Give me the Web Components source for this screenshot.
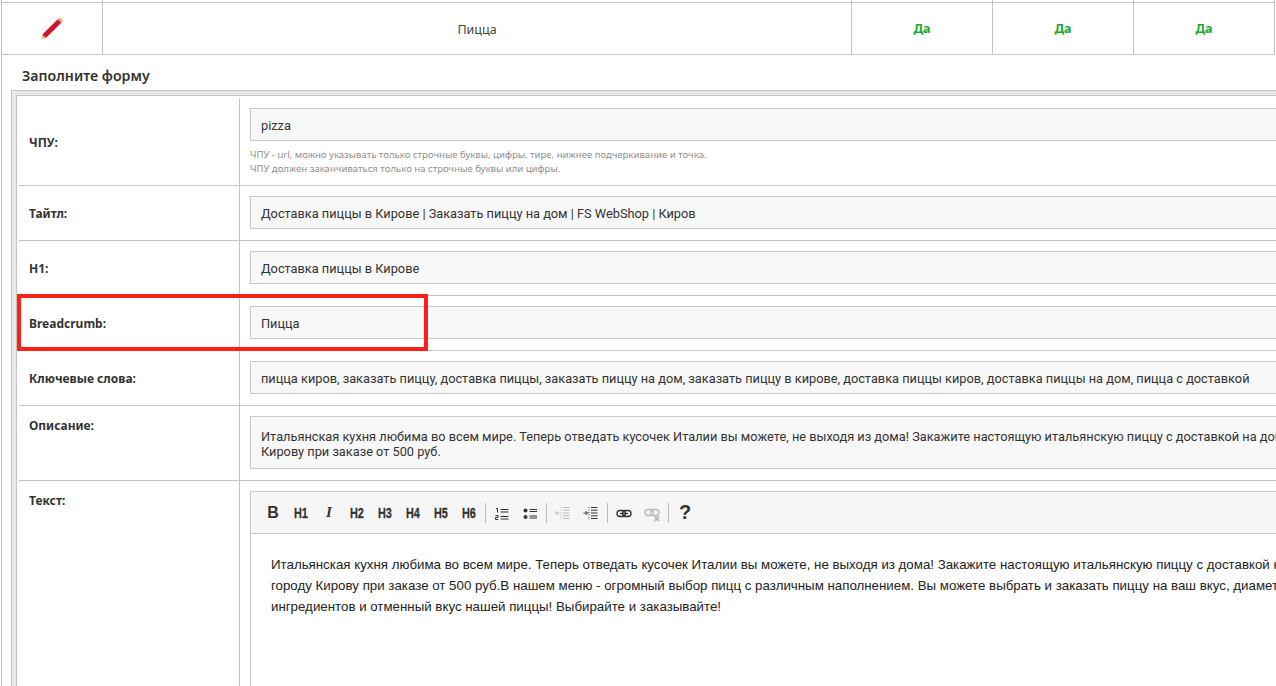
<!DOCTYPE html>
<html lang="ru"><head><meta charset="utf-8"><title>Форма</title>
<style>
html,body{margin:0;padding:0;width:1276px;height:686px;overflow:hidden;background:#fff}
body{font-family:"Noto Sans","Open Sans",sans-serif;font-size:13px;color:#333}
</style></head><body>
<data-row compact><span></span><span></span><span></span><span></span><span></span></data-row>
<data-row>
  <pencil-icon></pencil-icon><span>Пицца</span><yes-mark>Да</yes-mark><yes-mark>Да</yes-mark><yes-mark>Да</yes-mark>
</data-row>
<form-section heading="Заполните форму">
  <form-row label="ЧПУ:" center>
    <text-field>pizza</text-field>
    <help-text>ЧПУ - url, можно указывать только строчные буквы, цифры, тире, нижнее подчеркивание и точка.<br>ЧПУ должен заканчиваться только на строчные буквы или цифры.</help-text>
  </form-row>
  <form-row label="Тайтл:" center><text-field>Доставка пиццы в Кирове | Заказать пиццу на дом | FS WebShop | Киров</text-field></form-row>
  <form-row label="H1:" center><text-field>Доставка пиццы в Кирове</text-field></form-row>
  <form-row label="Breadcrumb:" center highlight><text-field>Пицца</text-field></form-row>
  <form-row label="Ключевые слова:" center><text-field>пицца киров, заказать пиццу, доставка пиццы, заказать пиццу на дом, заказать пиццу в кирове, доставка пиццы киров, доставка пиццы на дом, пицца с доставкой</text-field></form-row>
  <form-row label="Описание:"><text-field multi>Итальянская кухня любима во всем мире. Теперь отведать кусочек Италии вы можете, не выходя из дома! Закажите настоящую итальянскую пиццу с доставкой на дом по городу<br>Кирову при заказе от 500 руб.</text-field></form-row>
  <form-row label="Текст:">
    <rich-editor>Итальянская кухня любима во всем мире. Теперь отведать кусочек Италии вы можете, не выходя из дома! Закажите настоящую итальянскую пиццу с доставкой на дом по<br>городу Кирову при заказе от 500 руб.В нашем меню - огромный выбор пицц с различным наполнением. Вы можете выбрать и заказать пиццу на ваш вкус, диаметр<br>ингредиентов и отменный вкус нашей пиццы! Выбирайте и заказывайте!</rich-editor>
  </form-row>
</form-section>
<script>
function def(name, css, html){
  customElements.define(name, class extends HTMLElement{
    constructor(){super();const r=this.attachShadow({mode:'open'});
      r.innerHTML='<style>'+css+'</style>'+(typeof html==='function'?html(this):html);}
  });
}
const LINE='#c4c4c4';
def('data-row',`
  :host{display:grid;grid-template-columns:101px 749px 141px 141px 142px;margin-left:1px;width:1274px;height:51px;border-bottom:1px solid ${LINE};color:#444;font-size:12.5px}
  :host([compact]){height:2px}
  ::slotted(*){border-left:1px solid ${LINE};display:flex;align-items:center;justify-content:center;box-sizing:border-box;min-width:0}
  ::slotted(span){padding-top:1px}
  ::slotted(:last-child){border-right:1px solid ${LINE}}
`,'<slot></slot>');
def('yes-mark',`:host{color:#17ab2a;font-weight:700;font-size:12.5px}`,'<slot></slot>');
def('pencil-icon',`svg{display:block;width:24px;height:24px;margin:1px 0 0 0}`,`<svg viewBox="0 0 24 24" aria-hidden="true">
  <polygon points="1,22.5 2.4,17.6 5.9,21.1" fill="#fbb36b"/>
  <polygon points="2.4,17.6 17.8,2.2 21.3,5.7 5.9,21.1" fill="#d0142c"/>
  <polygon points="17.8,2.2 19.3,0.9 20.6,0.9 22.6,2.9 22.6,4.2 21.3,5.7" fill="#f6a57f"/>
</svg>`);
def('form-section',`
  :host{display:block;margin-left:1px;border-left:1px solid ${LINE};padding-left:9px;width:1500px;height:640px}
  h2{margin:0;font-size:14.2px;font-weight:600;color:#333;line-height:20px;padding:11px 0 4px 11px}
  .outer{border:1px solid ${LINE};background:#e9e9e9;padding:4px;border-right:0}
  .inner{border:1px solid ${LINE};background:#fff;padding:2px 0 0 2px}
`,h=>`<h2>${h.getAttribute('heading')}</h2><div class="outer"><div class="inner"><slot></slot></div></div>`);
def('form-row',`
  :host{display:grid;grid-template-columns:221px 1fr;border-bottom:1px solid ${LINE};position:relative}
  :host(:last-child){border-bottom:0}
  .label{border-right:1px solid ${LINE};padding:10px;font-weight:700;font-size:12px;color:#333;line-height:20px;box-sizing:border-box}
  :host([center]) .label{display:flex;align-items:center;padding-top:12px}
  .val{padding:10px 10px 11px;min-width:0}
  .mark{display:none;position:absolute;left:-2px;top:-2px;width:411px;height:57px;box-sizing:border-box;border:4px solid #fe2019;pointer-events:none}
  :host([highlight]) .mark{display:block}
`,h=>`<div class="label">${h.getAttribute('label')}</div><div class="val"><slot></slot></div><div class="mark"></div>`);
def('text-field',`
  :host{display:block;box-sizing:border-box;height:33px;border:1px solid #c8c8c8;background:#f8f8f8;padding:1px 10px 0;font-family:Roboto,"Noto Sans",sans-serif;font-size:12.78px;line-height:32px;white-space:nowrap;overflow:hidden;color:#333}
  :host([multi]){height:53px;line-height:15px;padding-top:12px}
`,'<slot></slot>');
def('help-text',`:host{display:block;font-size:9.58px;line-height:14px;color:#8f8f8f;margin-top:7px;margin-bottom:-2px;white-space:nowrap}`,'<slot></slot>');
def('tb-btn',`
  :host{display:flex;width:28px;height:28px;align-items:center;justify-content:center;font:700 15.5px "Liberation Sans",sans-serif;color:#333;flex:none}
  :host([head]) span{display:inline-block;transform:scaleX(.7);-webkit-text-stroke:.3px #333}
  :host([big]){font-size:16px}
  :host([ital]){font-style:italic;font-family:"Liberation Serif",serif;font-size:15px}
  ::slotted(svg){display:block;margin-top:2px}
`,'<span><slot></slot></span>');
def('tb-sep',`:host{display:block;width:5px;height:20px;flex:none}
  i{display:block;width:1px;height:20px;background:#bdbdbd;margin-left:2px}`,'<i></i>');
const S=(inner)=>`<svg viewBox="0 0 16 16" width="16" height="16" aria-hidden="true">${inner}</svg>`;
const ICONS={
 ol:`<path d="M2 2.5h1.5v4M6.5 3.5h8M6.5 6h8M6.5 10.5h8M6.5 13h8" fill="none" stroke="#333" stroke-width="1"/><path d="M1.5 9.5h2.6v2H1.5v2h2.8" fill="none" stroke="#333" stroke-width="1"/>`,
 ul:`<circle cx="3.5" cy="4.5" r="2" fill="#333"/><circle cx="3.5" cy="11" r="2" fill="#333"/><path d="M7.5 3.5h7.5M7.5 5.5h7.5M7.5 10h7.5M7.5 12h7.5" stroke="#333" stroke-width="1" fill="none"/>`,
 out:`<path d="M8 1.5h6.5M8 4.2h6.5M8 7h6.5M8 9.8h6.5M8 12.5h6.5" stroke="#bbb" fill="none"/><path d="M6 1v13" stroke="#bbb" stroke-dasharray="1 1.5" fill="none"/><path d="M4.5 7H.5M2.5 5 .5 7l2 2" stroke="#bbb" fill="none"/>`,
 ind:`<path d="M8 1.5h6.5M8 4.2h6.5M8 7h6.5M8 9.8h6.5M8 12.5h6.5" stroke="#333" fill="none"/><path d="M6 1v13" stroke="#333" stroke-dasharray="1 1.5" fill="none"/><path d="M.5 7H4.5M2.5 5l2 2-2 2" stroke="#333" fill="none"/>`,
 link:`<rect x="1" y="4.5" width="8.5" height="6" rx="3" fill="none" stroke="#333" stroke-width="1.4"/><rect x="6.5" y="4.5" width="8.5" height="6" rx="3" fill="none" stroke="#333" stroke-width="1.4"/><path d="M4 7.5h8" stroke="#333" stroke-width="1.2"/>`,
 unlink:`<rect x="1" y="3.5" width="8.5" height="6" rx="3" fill="none" stroke="#bbb" stroke-width="1.4"/><rect x="6.5" y="3.5" width="8.5" height="6" rx="3" fill="none" stroke="#bbb" stroke-width="1.4"/><path d="M10.5 10.5l4.5 4.5M15 10.5 10.5 15" stroke="#bbb" stroke-width="1.8"/>`
};
def('rich-editor',`
  :host{display:block;border:1px solid #c8c8c8;box-sizing:border-box;height:400px}
  .bar{display:flex;align-items:center;height:41px;padding-left:8px;background:#f6f6f6;border-bottom:1px solid #c8c8c8}
  .body{padding:20px 20px;font:13.3px/21px "Liberation Sans",sans-serif;color:#222;white-space:nowrap;overflow:hidden}
`,`<div class="bar">
  <tb-btn big>B</tb-btn><tb-btn head>H1</tb-btn><tb-btn ital>I</tb-btn><tb-btn head>H2</tb-btn><tb-btn head>H3</tb-btn><tb-btn head>H4</tb-btn><tb-btn head>H5</tb-btn><tb-btn head>H6</tb-btn>
  <tb-sep></tb-sep>
  <tb-btn>${S(ICONS.ol)}</tb-btn><tb-btn>${S(ICONS.ul)}</tb-btn>
  <tb-sep></tb-sep>
  <tb-btn>${S(ICONS.out)}</tb-btn><tb-btn>${S(ICONS.ind)}</tb-btn>
  <tb-sep></tb-sep>
  <tb-btn>${S(ICONS.link)}</tb-btn><tb-btn>${S(ICONS.unlink)}</tb-btn>
  <tb-sep></tb-sep>
  <tb-btn style="font-size:20px">?</tb-btn>
</div><div class="body"><slot></slot></div>`);
</script>
</body></html>
